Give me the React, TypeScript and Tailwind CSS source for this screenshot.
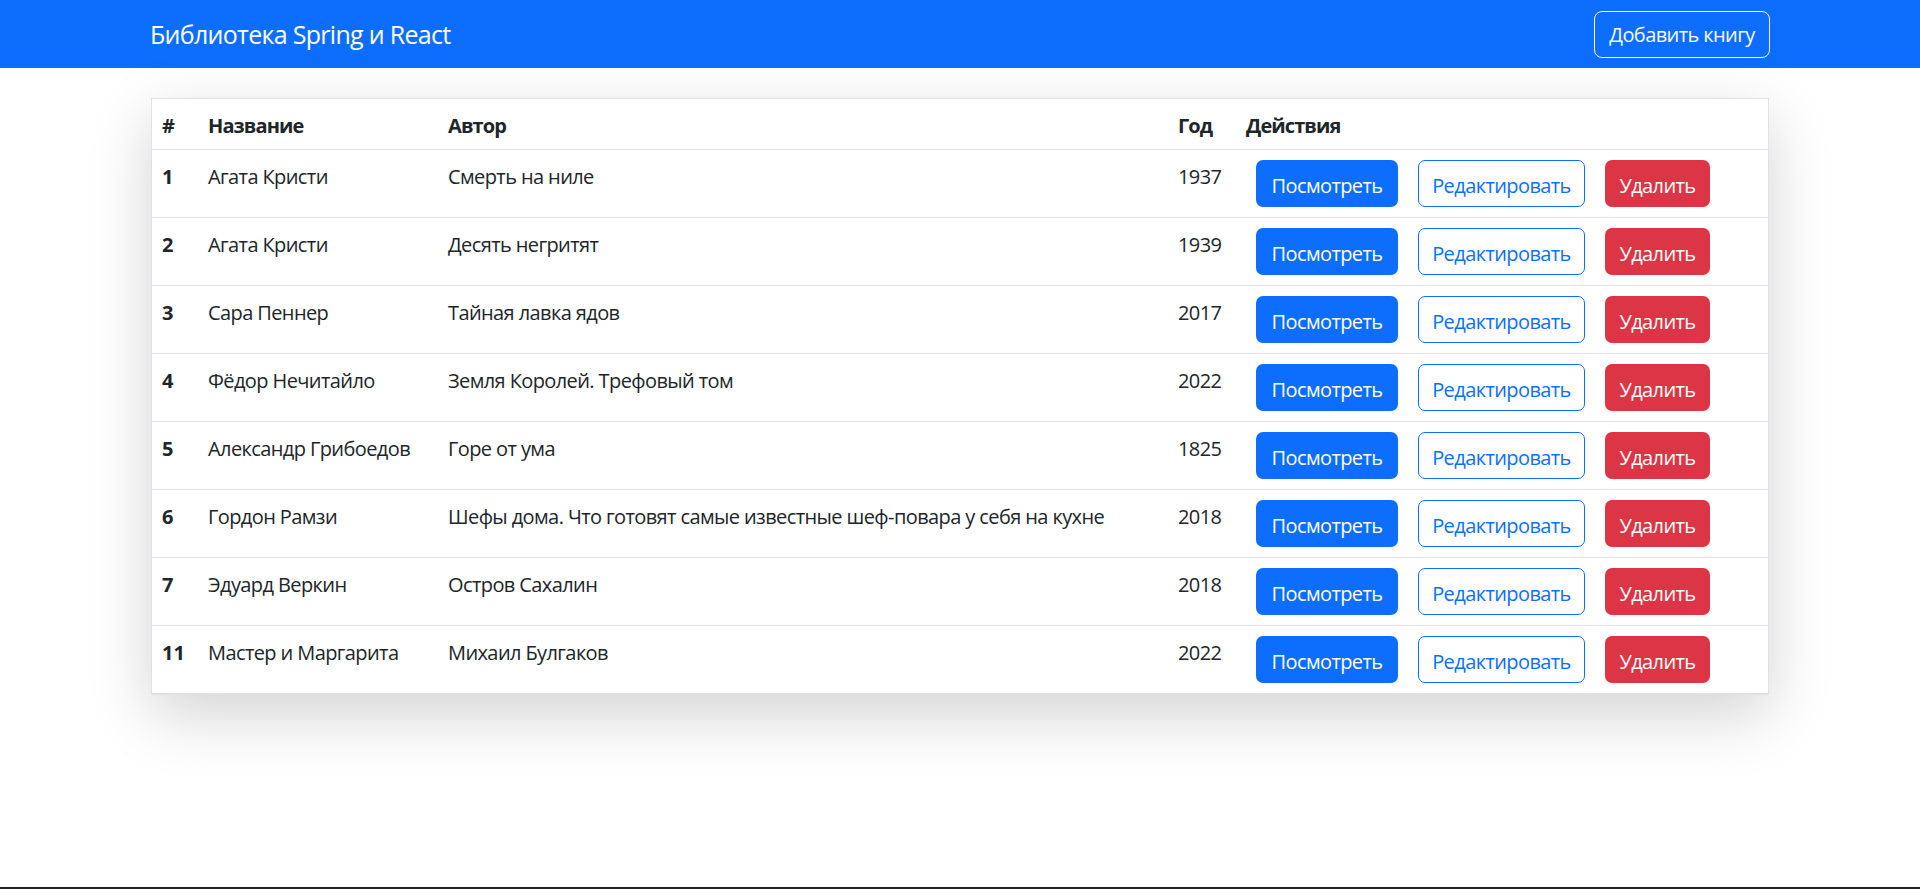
import React from 'react';

type Book = {
  id: number;
  title: string;
  author: string;
  year: number;
};

const books: Book[] = [
  { id: 1, title: 'Агата Кристи', author: 'Смерть на ниле', year: 1937 },
  { id: 2, title: 'Агата Кристи', author: 'Десять негритят', year: 1939 },
  { id: 3, title: 'Сара Пеннер', author: 'Тайная лавка ядов', year: 2017 },
  { id: 4, title: 'Фёдор Нечитайло', author: 'Земля Королей. Трефовый том', year: 2022 },
  { id: 5, title: 'Александр Грибоедов', author: 'Горе от ума', year: 1825 },
  {
    id: 6,
    title: 'Гордон Рамзи',
    author: 'Шефы дома. Что готовят самые известные шеф-повара у себя на кухне',
    year: 2018,
  },
  { id: 7, title: 'Эдуард Веркин', author: 'Остров Сахалин', year: 2018 },
  { id: 11, title: 'Мастер и Маргарита', author: 'Михаил Булгаков', year: 2022 },
];

const font = "font-['Open_Sans','Noto_Sans','Liberation_Sans',sans-serif]";

const Navbar = () => (
  <nav className="bg-[#0d6efd] h-[68px]">
    <div className="w-[1620px] mx-auto h-full flex items-center justify-between">
      <span className="text-[25px] leading-[37px] text-white tracking-[-0.7px]">
        Библиотека Spring и React
      </span>
      <button className="w-[176px] h-[47px] pt-[2px] rounded-[8px] border border-[#f8f9fa] text-[#f8f9fa] text-[20px] tracking-[-0.6px]">
        Добавить книгу
      </button>
    </div>
  </nav>
);

const BookRow = ({ book }: { book: Book }) => (
  <tr className="border-b border-[#dee2e6]">
    <th className="px-[10px] pt-[12px] text-left align-top font-bold leading-[30px]">{book.id}</th>
    <td className="px-[10px] pt-[12px] align-top leading-[30px] tracking-[-0.6px]">{book.title}</td>
    <td className="px-[10px] pt-[12px] align-top leading-[30px] tracking-[-0.6px] whitespace-nowrap">{book.author}</td>
    <td className="px-[10px] pt-[12px] align-top leading-[30px] tracking-[-0.6px]">{book.year}</td>
    <td className="px-[10px] py-[10px] align-top">
      <div className="flex gap-[20px] ml-[10px]">
        <button className="w-[142px] h-[47px] pt-[4px] rounded-[7px] bg-[#0d6efd] text-white tracking-[-0.6px]">
          Посмотреть
        </button>
        <button className="w-[167px] h-[47px] pt-[4px] rounded-[7px] border border-[#0d6efd] text-[#0d6efd] bg-white tracking-[-0.6px]">
          Редактировать
        </button>
        <button className="w-[105px] h-[47px] pt-[4px] rounded-[7px] bg-[#dc3545] text-white tracking-[-0.6px]">
          Удалить
        </button>
      </div>
    </td>
  </tr>
);

const App = () => {
  return (
    <div className={`${font} min-h-screen flex flex-col bg-white text-[#212529] text-[20px]`}>
      <Navbar />

      <main className="flex-1">
        <div className="w-[1618px] mx-auto mt-[30px] border border-[#dee2e6] bg-white shadow-[0_20px_60px_rgba(0,0,0,0.175)]">
          <table className="w-full table-fixed border-collapse">
            <colgroup>
              <col className="w-[46px]" />
              <col className="w-[240px]" />
              <col className="w-[730px]" />
              <col className="w-[68px]" />
              <col />
            </colgroup>
            <thead>
              <tr className="border-b border-[#dee2e6]">
                <th className="px-[10px] pt-[12px] pb-[8px] text-left font-bold leading-[30px]">#</th>
                <th className="px-[10px] pt-[12px] pb-[8px] text-left font-bold leading-[30px] tracking-[-0.9px]">Название</th>
                <th className="px-[10px] pt-[12px] pb-[8px] text-left font-bold leading-[30px] tracking-[-0.9px]">Автор</th>
                <th className="px-[10px] pt-[12px] pb-[8px] text-left font-bold leading-[30px] tracking-[-0.9px]">Год</th>
                <th className="px-[10px] pt-[12px] pb-[8px] text-left font-bold leading-[30px] tracking-[-0.9px]">Действия</th>
              </tr>
            </thead>
            <tbody>
              {books.map((book) => (
                <BookRow key={book.id} book={book} />
              ))}
            </tbody>
          </table>
        </div>
      </main>

      <div className="h-[2px] bg-[#202020]"></div>
    </div>
  );
};

export default App;
